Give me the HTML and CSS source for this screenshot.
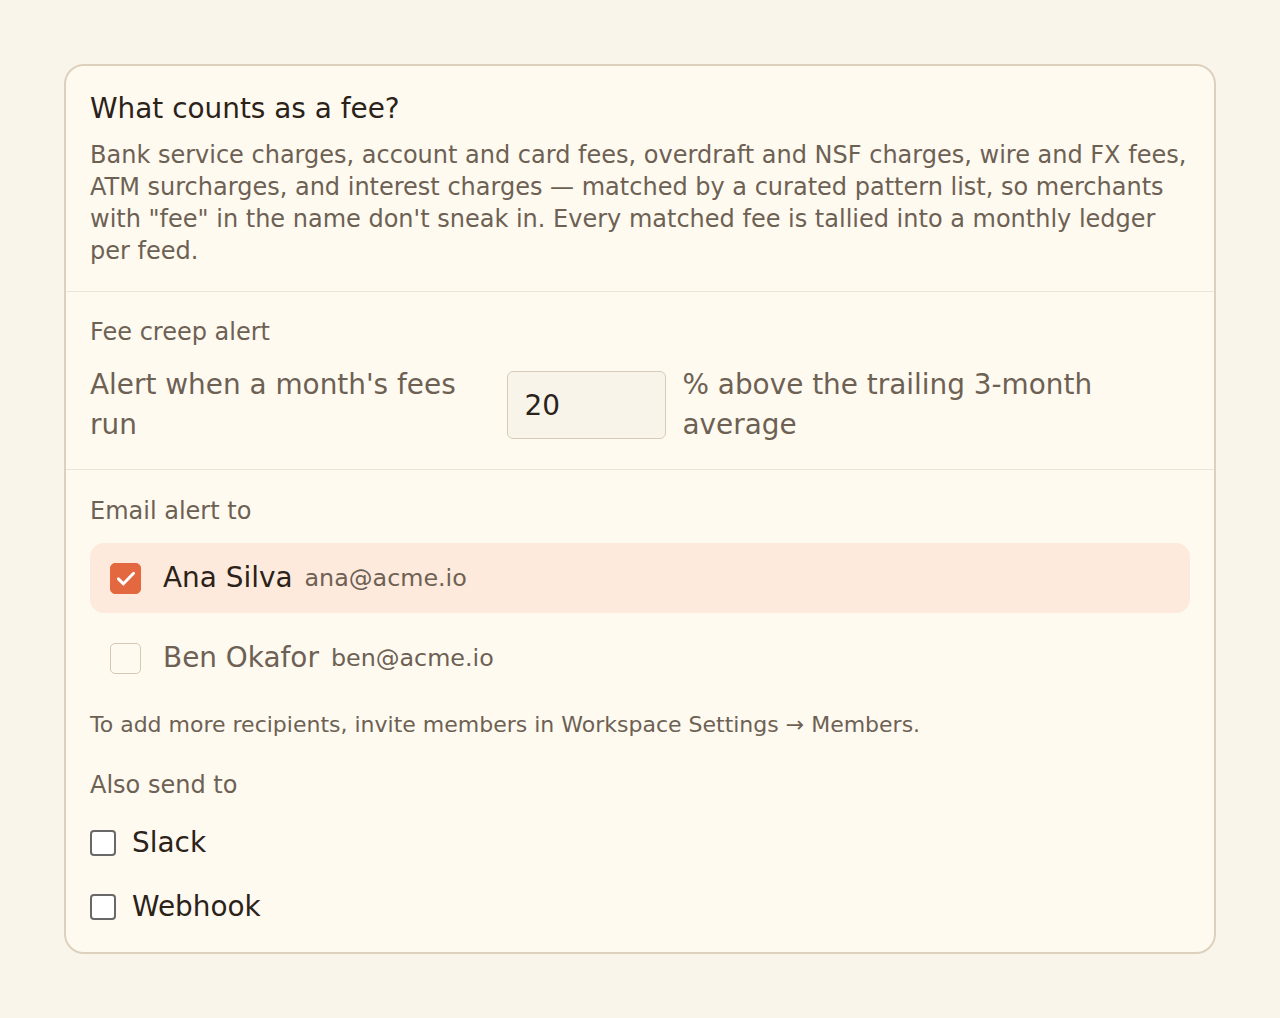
FILE: index.html
```html
<!DOCTYPE html>
<html>
<head>
<meta charset="utf-8">
<link rel="stylesheet" href="styles.css">
</head>
<body>
<div class="card">
  <section class="section intro">
    <h2 class="title">What counts as a fee?</h2>
    <p class="desc">Bank service charges, account and card fees, overdraft and NSF charges, wire and FX fees, ATM surcharges, and interest charges — matched by a curated pattern list, so merchants with "fee" in the name don't sneak in. Every matched fee is tallied into a monthly ledger per feed.</p>
  </section>
  <section class="section creep">
    <div class="label">Fee creep alert</div>
    <div class="creep-row">
      <span class="creep-text">Alert when a month's fees run</span>
      <div class="pct-input">20</div>
      <span class="creep-text">% above the trailing 3-month average</span>
    </div>
  </section>
  <section class="section email">
    <div class="label">Email alert to</div>
    <div class="recipients">
      <div class="recipient selected">
        <span class="rbox checked"><svg viewBox="0 0 24 24" width="26" height="26"><path d="M5 12.8l4.6 4.6 9.4-9.8" fill="none" stroke="#fff" stroke-width="2.7" stroke-linecap="round" stroke-linejoin="round"/></svg></span>
        <span class="rname">Ana Silva</span>
        <span class="remail">ana@acme.io</span>
      </div>
      <div class="recipient">
        <span class="rbox"></span>
        <span class="rname muted">Ben Okafor</span>
        <span class="remail">ben@acme.io</span>
      </div>
    </div>
    <p class="hint">To add more recipients, invite members in Workspace Settings → Members.</p>
    <div class="label also">Also send to</div>
    <div class="channels">
      <label class="channel"><span class="cbox"></span><span class="cname">Slack</span></label>
      <label class="channel"><span class="cbox"></span><span class="cname">Webhook</span></label>
    </div>
  </section>
</div>
</body>
</html>
```

FILE: styles.css
```css
* { box-sizing: border-box; }
html, body {
  margin: 0;
  padding: 0;
  background: #f9f5eb;
}
body {
  font-family: "DejaVu Sans", "Liberation Sans", sans-serif;
  color: #2b2219;
  padding: 64px;
}
.card {
  background: #fffaf0;
  border: 2px solid #ddd1be;
  border-radius: 20px;
  overflow: hidden;
}
.section {
  padding: 24px 24px 24px;
  border-top: 1.5px solid #ece4d5;
}
.section.intro {
  border-top: none;
  padding: 25px 24px 24px;
}
.title {
  margin: 0 0 12px;
  font-size: 27.9px;
  line-height: 36px;
  font-weight: normal;
  color: #2b2219;
}
.desc {
  margin: 0;
  font-size: 24px;
  line-height: 32px;
  color: #6d6154;
}
.label {
  font-size: 24px;
  line-height: 32px;
  color: #6d6154;
}
.creep-row {
  display: flex;
  align-items: center;
  gap: 16px;
  margin-top: 17px;
}
.creep-text {
  font-size: 27.9px;
  line-height: 40px;
  color: #6d6154;
}
.pct-input {
  flex: none;
  width: 159px;
  height: 68px;
  border: 1.5px solid #d8ccb8;
  border-radius: 6px;
  background: #f8f4ea;
  padding: 0 16px;
  display: flex;
  align-items: center;
  font-size: 27.9px;
  color: #2b2219;
}
.section.email {
  padding-top: 25px;
  padding-bottom: 25px;
}
.recipients {
  display: flex;
  flex-direction: column;
  gap: 10px;
  margin-top: 16px;
}
.recipient {
  display: flex;
  align-items: center;
  height: 70px;
  padding: 0 20px;
  border-radius: 14px;
}
.recipient.selected {
  background: #fdeadc;
}
.rbox {
  flex: none;
  width: 31px;
  height: 31px;
  border-radius: 5px;
  border: 1.5px solid #d5c8b2;
  background: #fffaf0;
  display: flex;
  align-items: center;
  justify-content: center;
  margin-right: 22px;
}
.rbox.checked {
  background: #e4683f;
  border-color: #e4683f;
}
.rname {
  font-size: 27.9px;
  line-height: 40px;
  color: #2b2219;
  margin-right: 12px;
}
.rname.muted {
  color: #6d6154;
}
.remail {
  font-size: 23.8px;
  line-height: 40px;
  color: #6d6154;
}
.hint {
  margin: 18px 0 0;
  font-size: 22px;
  line-height: 28px;
  color: #6d6154;
}
.label.also {
  margin-top: 30px;
}
.channels {
  display: flex;
  flex-direction: column;
  gap: 24px;
  margin-top: 22px;
}
.channel {
  display: flex;
  align-items: center;
  height: 40px;
}
.cbox {
  flex: none;
  width: 26px;
  height: 26px;
  border: 2px solid #686868;
  border-radius: 4px;
  background: #ffffff;
  margin-right: 16px;
}
.cname {
  font-size: 27.9px;
  line-height: 40px;
  color: #2b2219;
}
```
